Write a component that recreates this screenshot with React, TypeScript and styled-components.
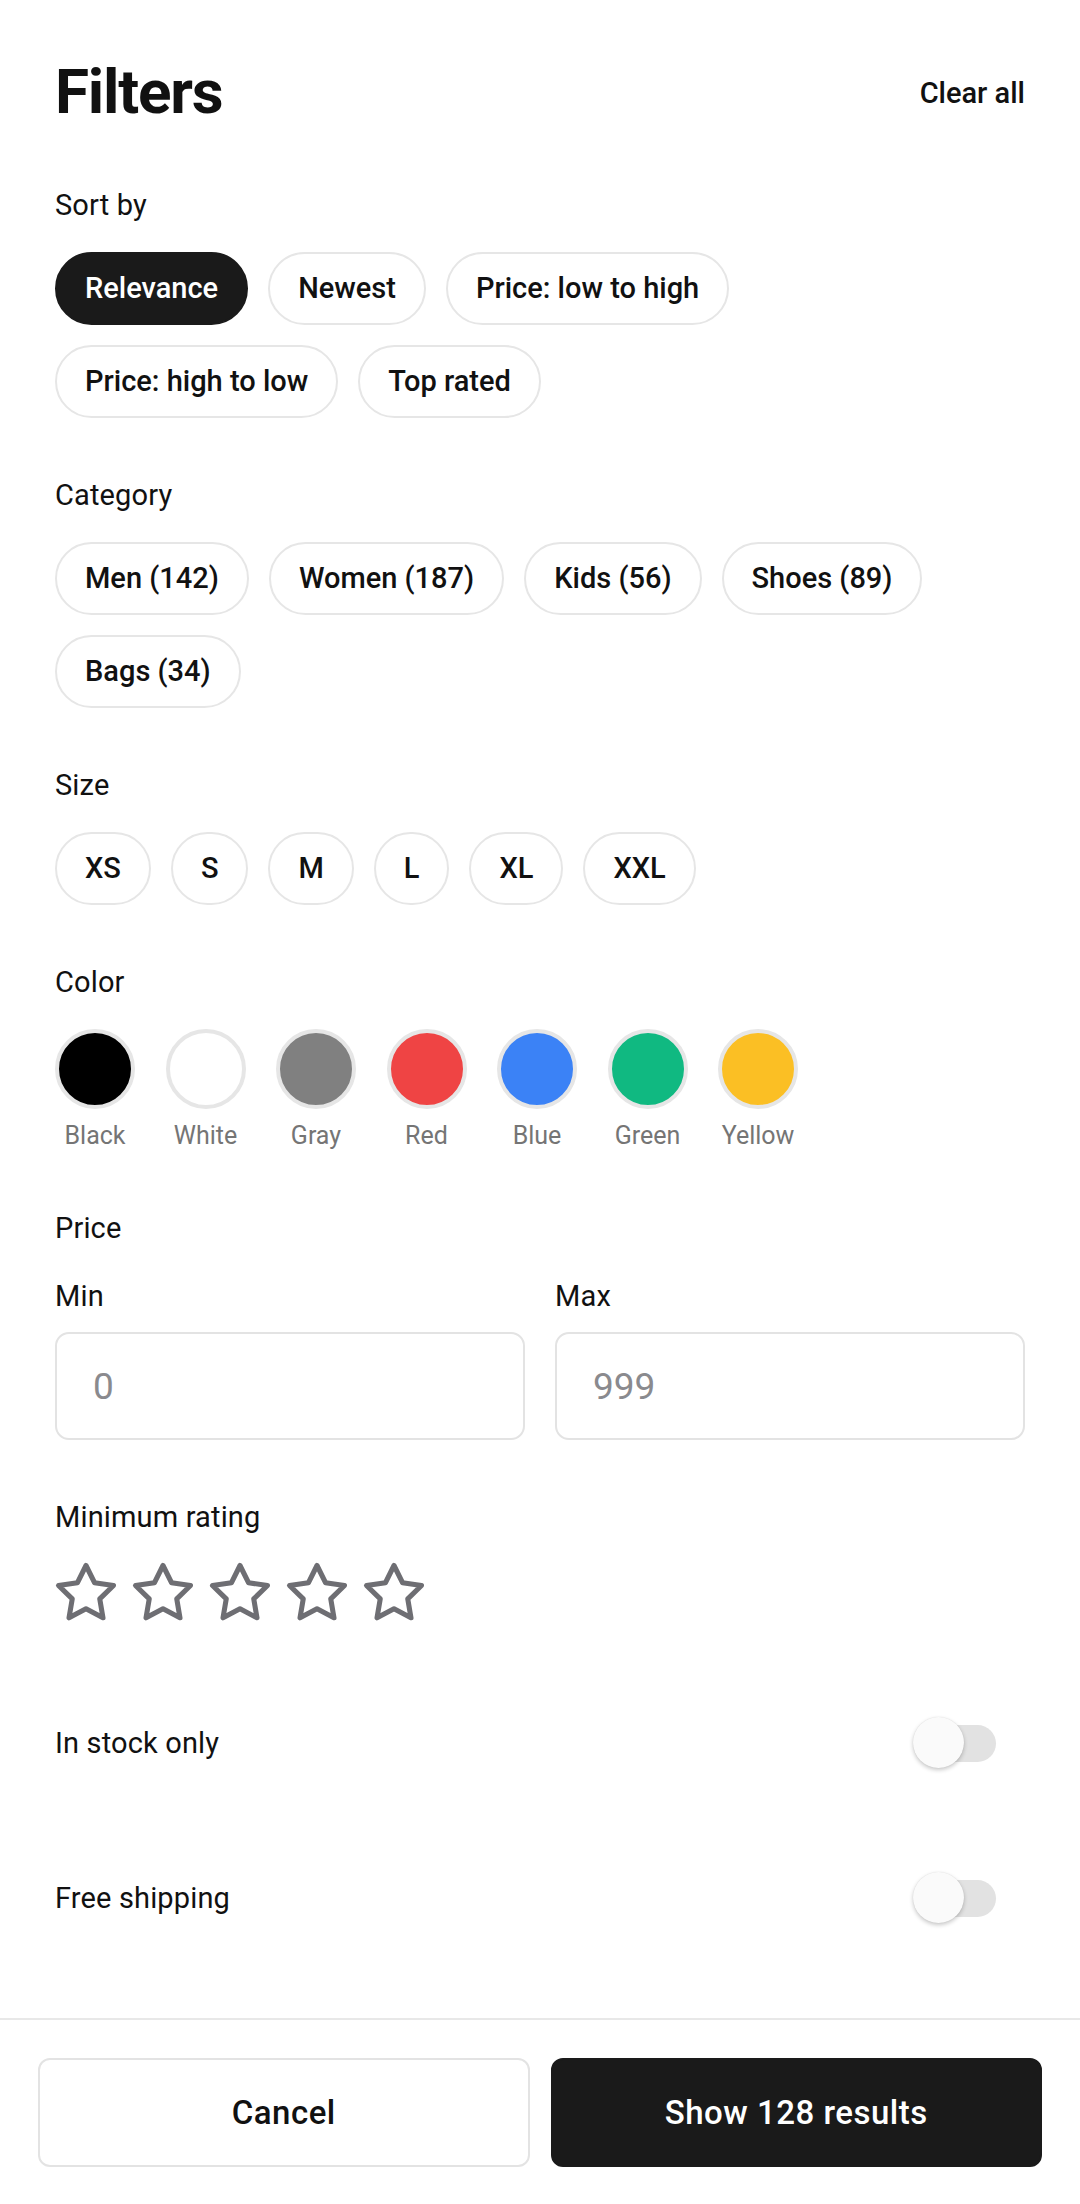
import React, { useState } from "react";
import styled, { createGlobalStyle } from "styled-components";

const GlobalStyle = createGlobalStyle`
  html, body {
    margin: 0;
    padding: 0;
    background: #ffffff;
  }
  body {
    font-family: Roboto, "Liberation Sans", Arial, sans-serif;
    color: #111111;
    -webkit-font-smoothing: antialiased;
  }
  * { box-sizing: border-box; }
`;

const Page = styled.div`
  display: flex;
  flex-direction: column;
  min-height: 100vh;
  background: #ffffff;
`;

const Content = styled.main`
  flex: 1;
  display: flex;
  flex-direction: column;
  padding: 56px 55px 0 55px;
`;

const Header = styled.header`
  display: flex;
  align-items: center;
  justify-content: space-between;
  height: 72px;
`;

const Title = styled.h1`
  margin: 0;
  font-size: 62px;
  font-weight: 700;
  line-height: 72px;
  letter-spacing: -1.2px;
  color: #111111;
`;

const ClearButton = styled.button`
  background: none;
  border: none;
  padding: 2px 0 0 0;
  font-family: inherit;
  font-size: 29px;
  font-weight: 500;
  line-height: 34px;
  color: #111111;
  cursor: pointer;
`;

const Section = styled.section`
  margin-top: 60px;
  display: flex;
  flex-direction: column;
`;

const SectionLabel = styled.div<{ $space?: number }>`
  font-size: 29px;
  font-weight: 400;
  line-height: 34px;
  letter-spacing: 0.15px;
  color: #111111;
  margin-bottom: ${(p) => (p.$space ?? 30)}px;
`;

const ChipWrap = styled.div`
  display: flex;
  flex-wrap: wrap;
  gap: 20px;
`;

const Chip = styled.button<{ $active?: boolean }>`
  padding: 17px 28px 18px;
  border-radius: 999px;
  border: 2px solid ${(p) => (p.$active ? "#1a1a1a" : "#e6e6e6")};
  background: ${(p) => (p.$active ? "#1a1a1a" : "#ffffff")};
  color: ${(p) => (p.$active ? "#ffffff" : "#111111")};
  font-family: inherit;
  font-size: 29px;
  font-weight: 500;
  line-height: 34px;
  white-space: nowrap;
  cursor: pointer;
`;

const SwatchRow = styled.div`
  display: flex;
  gap: 30.5px;
`;

const SwatchItem = styled.div`
  display: flex;
  flex-direction: column;
  align-items: center;
  gap: 12px;
  width: 80px;
`;

const SwatchCircle = styled.button<{ $color: string }>`
  width: 80px;
  height: 80px;
  border-radius: 50%;
  border: 4px solid #e6e6e6;
  background: ${(p) => p.$color};
  padding: 0;
  cursor: pointer;
`;

const SwatchName = styled.span`
  font-size: 25px;
  line-height: 30px;
  color: #757575;
  white-space: nowrap;
`;

const PriceGrid = styled.div`
  display: grid;
  grid-template-columns: 1fr 1fr;
  gap: 30px;
`;

const Field = styled.label`
  display: flex;
  flex-direction: column;
  gap: 19px;
`;

const FieldLabel = styled.span`
  font-size: 29px;
  font-weight: 400;
  line-height: 34px;
  letter-spacing: 0.15px;
  color: #111111;
`;

const PriceInput = styled.input`
  width: 100%;
  height: 108px;
  border: 2px solid #e3e3e3;
  border-radius: 14px;
  padding: 0 36px;
  font-family: inherit;
  font-size: 37px;
  color: #111111;
  background: #ffffff;
  outline: none;
  &::placeholder {
    color: #8a8a8e;
  }
`;

const StarRow = styled.div`
  display: flex;
  gap: 11px;
  margin-left: -2px;
  margin-top: -2px;
`;

const StarButton = styled.button`
  background: none;
  border: none;
  padding: 0;
  width: 66px;
  height: 66px;
  display: flex;
  cursor: pointer;
`;

const ToggleGroup = styled.div`
  margin-top: 39px;
  display: flex;
  flex-direction: column;
`;

const ToggleRow = styled.div`
  display: flex;
  align-items: center;
  justify-content: space-between;
  height: 155px;
`;

const ToggleLabel = styled.span`
  font-size: 29px;
  font-weight: 400;
  line-height: 34px;
  letter-spacing: 0.15px;
  color: #111111;
`;

const Switch = styled.button`
  position: relative;
  width: 83px;
  height: 52px;
  margin-right: 29px;
  padding: 0;
  border: none;
  background: none;
  cursor: pointer;
`;

const Track = styled.span<{ $on?: boolean }>`
  position: absolute;
  left: 5px;
  top: 8px;
  width: 78px;
  height: 37px;
  border-radius: 19px;
  background: ${(p) => (p.$on ? "#9a9a9a" : "#e2e2e2")};
`;

const Knob = styled.span<{ $on?: boolean }>`
  position: absolute;
  top: 0;
  left: ${(p) => (p.$on ? "32px" : "0")};
  width: 51px;
  height: 51px;
  border-radius: 50%;
  background: #fafafa;
  box-shadow: 0 2px 4px rgba(0, 0, 0, 0.22), 0 0 1px rgba(0, 0, 0, 0.12);
`;

const Footer = styled.footer`
  border-top: 2px solid #e8e8e8;
  padding: 38px 38px 37px;
  display: grid;
  grid-template-columns: 1fr 1fr;
  gap: 21px;
  background: #ffffff;
`;

const FooterButton = styled.button<{ $primary?: boolean }>`
  height: 109px;
  border-radius: 12px;
  border: 2px solid ${(p) => (p.$primary ? "#1a1a1a" : "#e3e3e3")};
  background: ${(p) => (p.$primary ? "#1a1a1a" : "#ffffff")};
  color: ${(p) => (p.$primary ? "#ffffff" : "#111111")};
  font-family: inherit;
  font-size: 33px;
  font-weight: 500;
  letter-spacing: 0.5px;
  cursor: pointer;
`;

const StarIcon = () => (
  <svg width="66" height="66" viewBox="0 0 24 24" fill="none">
    <polygon
      points="12,2 15.09,8.26 22,9.27 17,14.14 18.18,21.02 12,17.77 5.82,21.02 7,14.14 2,9.27 8.91,8.26"
      stroke="#6e6e73"
      strokeWidth="1.85"
      strokeLinejoin="round"
      strokeLinecap="round"
    />
  </svg>
);

const sortOptions = ["Relevance", "Newest", "Price: low to high", "Price: high to low", "Top rated"];
const categories = ["Men (142)", "Women (187)", "Kids (56)", "Shoes (89)", "Bags (34)"];
const sizes = ["XS", "S", "M", "L", "XL", "XXL"];
const colors = [
  { name: "Black", value: "#000000" },
  { name: "White", value: "#ffffff" },
  { name: "Gray", value: "#808080" },
  { name: "Red", value: "#ef4444" },
  { name: "Blue", value: "#3b82f6" },
  { name: "Green", value: "#10b981" },
  { name: "Yellow", value: "#fbbf24" },
];

export default function App() {
  const [sort, setSort] = useState("Relevance");
  const [inStock, setInStock] = useState(false);
  const [freeShip, setFreeShip] = useState(false);

  return (
    <Page>
      <GlobalStyle />
      <Content>
        <Header>
          <Title>Filters</Title>
          <ClearButton>Clear all</ClearButton>
        </Header>

        <Section>
          <SectionLabel>Sort by</SectionLabel>
          <ChipWrap>
            {sortOptions.map((o) => (
              <Chip key={o} $active={o === sort} onClick={() => setSort(o)}>
                {o}
              </Chip>
            ))}
          </ChipWrap>
        </Section>

        <Section>
          <SectionLabel>Category</SectionLabel>
          <ChipWrap>
            {categories.map((c) => (
              <Chip key={c}>{c}</Chip>
            ))}
          </ChipWrap>
        </Section>

        <Section>
          <SectionLabel>Size</SectionLabel>
          <ChipWrap>
            {sizes.map((s) => (
              <Chip key={s}>{s}</Chip>
            ))}
          </ChipWrap>
        </Section>

        <Section>
          <SectionLabel>Color</SectionLabel>
          <SwatchRow>
            {colors.map((c) => (
              <SwatchItem key={c.name}>
                <SwatchCircle $color={c.value} aria-label={c.name} />
                <SwatchName>{c.name}</SwatchName>
              </SwatchItem>
            ))}
          </SwatchRow>
        </Section>

        <Section>
          <SectionLabel $space={34}>Price</SectionLabel>
          <PriceGrid>
            <Field>
              <FieldLabel>Min</FieldLabel>
              <PriceInput placeholder="0" />
            </Field>
            <Field>
              <FieldLabel>Max</FieldLabel>
              <PriceInput placeholder="999" />
            </Field>
          </PriceGrid>
        </Section>

        <Section>
          <SectionLabel $space={28}>Minimum rating</SectionLabel>
          <StarRow>
            {[1, 2, 3, 4, 5].map((n) => (
              <StarButton key={n} aria-label={`${n} stars`}>
                <StarIcon />
              </StarButton>
            ))}
          </StarRow>
        </Section>

        <ToggleGroup>
          <ToggleRow>
            <ToggleLabel>In stock only</ToggleLabel>
            <Switch onClick={() => setInStock(!inStock)}>
              <Track $on={inStock} />
              <Knob $on={inStock} />
            </Switch>
          </ToggleRow>
          <ToggleRow>
            <ToggleLabel>Free shipping</ToggleLabel>
            <Switch onClick={() => setFreeShip(!freeShip)}>
              <Track $on={freeShip} />
              <Knob $on={freeShip} />
            </Switch>
          </ToggleRow>
        </ToggleGroup>
      </Content>

      <Footer>
        <FooterButton>Cancel</FooterButton>
        <FooterButton $primary>Show 128 results</FooterButton>
      </Footer>
    </Page>
  );
}
